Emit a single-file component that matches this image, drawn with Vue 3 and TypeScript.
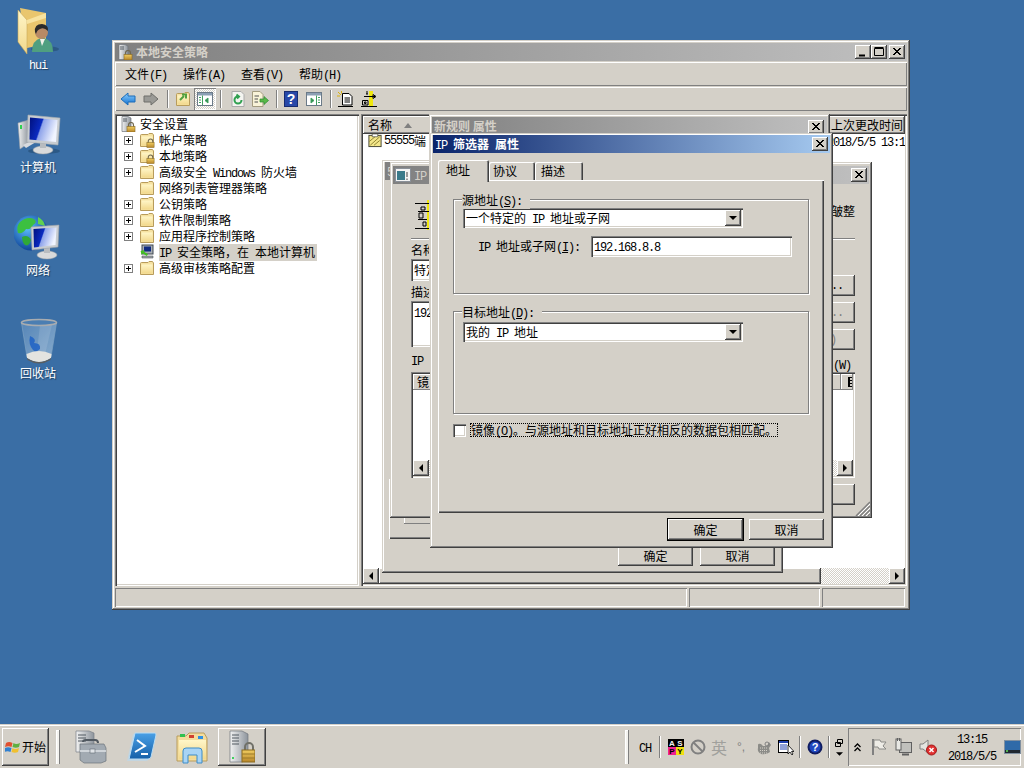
<script setup lang="ts">
import { h } from 'vue'

// Renders mixed text: Latin runs use the mono face at the 6px cell of the bitmap font; &X underlines X.
const T = (p: { s: string }) =>
  p.s.split(/([\x20-\x7e]+)/).map((run, i) =>
    i % 2
      ? h('span', { class: 'lat' }, run.split(/&(.)/).map((r, j) => (j % 2 ? h('u', r) : r)))
      : run,
  )

const menus = ['文件(F)', '操作(A)', '查看(V)', '帮助(H)']
const tree = [
  { t: '帐户策略', exp: true, lock: true },
  { t: '本地策略', exp: true, lock: true },
  { t: '高级安全 Windows 防火墙', exp: true },
  { t: '网络列表管理器策略', exp: false },
  { t: '公钥策略', exp: true },
  { t: '软件限制策略', exp: true },
  { t: '应用程序控制策略', exp: true },
  { t: 'IP 安全策略，在 本地计算机', exp: false, ip: true },
  { t: '高级审核策略配置', exp: true },
]
const desktop = [
  { id: '#d-user', t: 'hui' },
  { id: '#d-pc', t: '计算机' },
  { id: '#d-net', t: '网络' },
  { id: '#d-bin', t: '回收站' },
]
</script>

<template>
  <div class="screen">
    <svg class="defs" width="0" height="0">
      <defs>
        <linearGradient id="g-fold" x1="0" y1="0" x2="0" y2="1"><stop offset="0" stop-color="#fff6c8" /><stop offset="1" stop-color="#f2d88c" /></linearGradient>
        <linearGradient id="g-screen" x1="0" y1="0" x2="1" y2="0.3"><stop offset="0" stop-color="#00107c" /><stop offset="0.45" stop-color="#0a2ac0" /><stop offset="0.5" stop-color="#8fa4ea" /><stop offset="1" stop-color="#f0f4ff" /></linearGradient>
        <linearGradient id="g-metal" x1="0" y1="0" x2="1" y2="0"><stop offset="0" stop-color="#f2f2f2" /><stop offset="1" stop-color="#8d949c" /></linearGradient>
        <linearGradient id="g-blue" x1="0" y1="0" x2="0" y2="1"><stop offset="0" stop-color="#8fd0ff" /><stop offset="1" stop-color="#1070d0" /></linearGradient>
        <linearGradient id="g-ps" x1="0" y1="0" x2="0" y2="1"><stop offset="0" stop-color="#4aa0e6" /><stop offset="1" stop-color="#1560a8" /></linearGradient>
        <radialGradient id="g-globe" cx="0.4" cy="0.35" r="0.7"><stop offset="0" stop-color="#5cc0ff" /><stop offset="1" stop-color="#0a3a90" /></radialGradient>
        <linearGradient id="g-bin" x1="0" y1="0" x2="1" y2="1"><stop offset="0" stop-color="#5e8cbc" /><stop offset="1" stop-color="#9cbcd8" /></linearGradient>
        <linearGradient id="g-gold" x1="0" y1="0" x2="0" y2="1"><stop offset="0" stop-color="#f0cc60" /><stop offset="1" stop-color="#b8862a" /></linearGradient>
      </defs>
      <symbol id="folder" viewBox="0 0 16 16">
        <path d="M1.5 3.5 Q1.5 2.5 2.5 2.5 H9 L10 1.5 H13.5 L14.5 3 V14.5 H1.5 Z" fill="#f6e2a2" stroke="#b89c5c" />
        <rect x="2.5" y="4.5" width="11" height="9" fill="url(#g-fold)" />
      </symbol>
      <symbol id="lock" viewBox="0 0 10 10">
        <path d="M2.5 5 V3 a2.5 2.5 0 0 1 5 0 V5" fill="none" stroke="#706850" stroke-width="1.2" />
        <rect x="1" y="4.5" width="8" height="5.5" fill="url(#g-gold)" stroke="#8a6a20" stroke-width=".6" />
      </symbol>
      <symbol id="server" viewBox="0 0 16 16">
        <path d="M2 0.5 H8 L11 2 V14 L8 15.5 H2 Z" fill="url(#g-metal)" stroke="#70767c" stroke-width=".7" />
        <path d="M3 3 H7 M3 5 H7" stroke="#505860" />
      </symbol>
      <symbol id="d-user" viewBox="0 0 48 48">
        <path d="M6 0 L32 5 V36 L13 40 Z" fill="#e9c66e" />
        <path d="M4 2 L13 12 V46 L4 34 Z" fill="url(#g-fold)" stroke="#c9a858" stroke-width=".6" />
        <path d="M13 12 L32 5 V10 L13 16 Z" fill="#f7e3a0" />
        <ellipse cx="31" cy="41" rx="14" ry="3" fill="#1e4468" opacity=".5" />
        <path d="M18 44 Q18 32 27 30 H30 Q39 32 39 44 Z" fill="#4f9f80" />
        <path d="M26 31 L28 38 L31 31 Z" fill="#f0f0e8" />
        <circle cx="27.500" cy="24.500" r="6.500" fill="#b88a66" />
        <path d="M21 24 Q20 16 28 16 Q35 17 34 23 Q30 19 26 21 Q23 22 22 26 Z" fill="#2a2a2a" />
      </symbol>
      <symbol id="d-pc" viewBox="0 0 48 48">
        <ellipse cx="30" cy="40" rx="16" ry="3" fill="#1e4468" opacity=".5" />
        <path d="M4 12 L15 9 V32 L6 38 Z" fill="url(#g-metal)" stroke="#9aa0a6" stroke-width=".6" />
        <rect x="6" y="14" width="2" height="4" fill="#30d050" />
        <path d="M9 34 L19 29 L22 31 L12 37 Z" fill="#d8dade" />
        <ellipse cx="29" cy="39" rx="10" ry="4" fill="#d9dadb" stroke="#a0a4a8" stroke-width=".5" />
        <rect x="26" y="31" width="6" height="6" fill="#b8bcc0" />
        <path d="M14 4 L46 7 L44 34 L13 31 Z" fill="#c8ccd0" stroke="#a8acb0" stroke-width=".6" />
        <path d="M16 6.500 L43.500 9 L42 31 L15.500 28.500 Z" fill="url(#g-screen)" />
      </symbol>
      <symbol id="d-net" viewBox="0 0 48 48">
        <circle cx="17" cy="19" r="17.500" fill="url(#g-globe)" />
        <path d="M6 8 Q13 2 20 5 Q24 8 19 11 Q17 16 12 15 Q9 20 4 19 Q2 12 6 8 Z" fill="#3cc040" />
        <path d="M8 23 Q14 20 17 26 Q15 33 11 31 Q8 28 8 23 Z" fill="#2fa838" />
        <path d="M24 3 Q30 6 31 12 L24 10 Z" fill="#60d050" />
        <ellipse cx="33" cy="41" rx="10" ry="4" fill="#d9dadb" stroke="#a0a4a8" stroke-width=".5" />
        <rect x="30" y="33" width="6" height="6" fill="#b8bcc0" />
        <path d="M17 13 L45 11 L44 33 L18 36 Z" fill="#c8ccd0" stroke="#9aa0a6" stroke-width=".6" />
        <path d="M19.500 15 L42.500 13.500 L41.500 31 L20 33.500 Z" fill="url(#g-screen)" />
      </symbol>
      <symbol id="d-bin" viewBox="0 0 48 48">
        <path d="M7.500 6 L13 40 Q25 49 37 40 L42.500 6 Z" fill="url(#g-bin)" opacity=".8" stroke="#8fb0cc" stroke-width=".7" />
        <path d="M26 8 L22 42 H30 L38 8 Z" fill="#fff" opacity=".12" />
        <path d="M16 19 Q23 22 20 26 Q27 26 26 32 Q22 36 19 33 Q14 27 16 19 Z" fill="#1f62c4" opacity=".85" />
        <path d="M12.500 37 Q25 31 37.500 37 L37 41 Q25 49 13 41 Z" fill="#e4e4e0" />
        <path d="M13 41 Q25 49 37 41 L36.500 43 Q25 50 13.500 43 Z" fill="#5a5e60" />
        <ellipse cx="25" cy="5.500" rx="17.500" ry="3" fill="#4b7eb2" stroke="#a8acb0" stroke-width="1.600" />
      </symbol>
      <symbol id="i-x" viewBox="0 0 16 14">
        <path d="M4 3 L11 10 M5 3 L12 10 M11 3 L4 10 M12 3 L5 10" stroke="#000" stroke-width="1" fill="none" />
      </symbol>
    </svg>

    <!-- Desktop shortcuts -->
    <div class="shortcuts">
      <div v-for="d in desktop" :key="d.t" class="shortcut">
        <svg class="s48"><use :href="d.id" /></svg>
        <span class="shortcut-label"><T :s="d.t" /></span>
      </div>
    </div>

    <!-- MMC window -->
    <section class="win main">
      <header class="title off">
        <svg class="t-ic" viewBox="0 0 16 16"><use href="#server" /><use href="#lock" x="6" y="6" width="10" height="10" /></svg>
        <span class="title-text">本地安全策略</span>
        <span class="caps">
          <i class="cap"><svg viewBox="0 0 16 14"><path d="M4 10.500 H10" stroke="#000" stroke-width="2" /></svg></i>
          <i class="cap"><svg viewBox="0 0 16 14"><path d="M3.500 3.500 H12.500 V10.500 H3.500 Z M3.500 2.500 H12.500" fill="none" stroke="#000" /></svg></i>
          <i class="cap cap-x"><svg><use href="#i-x" /></svg></i>
        </span>
      </header>
      <nav class="menubar">
        <span v-for="m in menus" :key="m" class="menu"><T :s="m" /></span>
      </nav>
      <div class="toolbar">
        <svg class="tool back" viewBox="0 0 16 16"><path d="M1 8 L8 2 V5 H15 V11 H8 V14 Z" fill="url(#g-blue)" stroke="#1c6cb8" /></svg>
        <svg class="tool fwd" viewBox="0 0 16 16"><path d="M15 8 L8 2 V5 H1 V11 H8 V14 Z" fill="#9a9a96" stroke="#6e6e6a" /></svg>
        <i class="tsep s1"></i>
        <svg class="tool up" viewBox="0 0 16 16"><use href="#folder" /><path d="M5 9 L9 5 M7 3.500 H11 V7.500" stroke="#50a040" stroke-width="2" fill="none" /></svg>
        <span class="tree-btn">
          <svg viewBox="0 0 16 14"><rect x=".5" y=".5" width="15" height="13" fill="#fff" stroke="#6b7a88" /><rect x="1" y="1" width="14" height="2.500" fill="#8ca0b4" /><path d="M5.500 3.500 V13 M2 5.500 H4 M2 8 H4 M2 10.500 H4 M11 6 L8 8.500 L11 11 Z" stroke="#40a060" fill="#309050" /></svg>
        </span>
        <i class="tsep s2"></i>
        <svg class="tool refresh" viewBox="0 0 16 16"><path d="M2 .5 H11 L14 3.500 V15.500 H2 Z" fill="#f4f4f0" stroke="#aaa" /><path d="M11.500 9 A3.500 3.500 0 1 1 8 5.500 M6.500 3.500 L9 5.500 L7 7.500" stroke="#30a050" stroke-width="2" fill="none" /></svg>
        <svg class="tool export" viewBox="0 0 18 16"><path d="M1.500 .5 H9 L12 3.500 V15.500 H1.500 Z" fill="#f9f3d8" stroke="#a49c80" /><path d="M3.500 5 H8 M3.500 8 H7 M3.500 11 H7" stroke="#505050" /><path d="M9 8 H13 V5.500 L17.500 9.500 L13 13.500 V11 H9 Z" fill="#58b848" stroke="#2c8a30" stroke-width=".7" /></svg>
        <i class="tsep s3"></i>
        <svg class="tool help" viewBox="0 0 14 16"><rect x=".5" y=".5" width="13" height="15" fill="#2848a8" stroke="#182c70" /><text x="7" y="13" text-anchor="middle" class="help-q">?</text></svg>
        <svg class="tool pane" viewBox="0 0 16 14"><rect x=".5" y=".5" width="15" height="13" fill="#fff" stroke="#6b7a88" /><rect x="1" y="1" width="14" height="2.500" fill="#8ca0b4" /><path d="M10.500 3.500 V13 M12 5.500 H14 M12 8 H14 M12 10.500 H14 M5 6 L8 8.500 L5 11 Z" stroke="#40a060" fill="#309050" /></svg>
        <i class="tsep s4"></i>
        <svg class="tool newdoc" viewBox="0 0 17 16"><path d="M5.500 2.500 H12 L15 5.500 V14 H5.500 Z" fill="#fff" stroke="#000" /><path d="M7.500 7 H13 M7.500 9 H13 M7.500 11 H13" stroke="#000" /><path d="M1 15.500 H16" stroke="#000" /><path d="M1 1 L4 4 M0 5 H3 M4.500 0 V2.500" stroke="#d8b010" /></svg>
        <svg class="tool arrow" viewBox="0 0 16 16"><rect x="8" y="0" width="4" height="15" fill="#f0e810" /><path d="M0 15.500 H16" stroke="#000" /><path d="M3 5.500 H14 M12 3.500 L15 5.500 L12 7.500 Z M1.500 9.500 H7 V14 H1.500 Z M3.500 11 H5 V12.500 H3.500 Z M5 3 H7 M7 2 H5 M7 0 H5" stroke="#000" fill="none" /></svg>
      </div>

      <div class="panes">
        <div class="sunken tree">
          <div class="row root">
            <svg class="ico16" viewBox="0 0 16 16"><use href="#server" /><use href="#lock" x="6" y="6" width="10" height="10" /></svg>
            <span class="row-text">安全设置</span>
          </div>
          <div v-for="n in tree" :key="n.t" class="row child">
            <span class="exp" :class="{ none: !n.exp }"></span>
            <svg v-if="n.ip" class="ico16 ipico" viewBox="0 0 16 16">
              <rect x="3" y="1" width="11" height="9" fill="#a8aeb4" stroke="#404850" /><rect x="5" y="2.500" width="7" height="5" fill="#102a80" /><path d="M3 12 H14 V14 H3 Z" fill="#a0a4a8" stroke="#505860" stroke-width=".6" /><path d="M1 9 L4 6 V8 H9 V10 H4 V12 Z" fill="#40c020" transform="rotate(32 5 9)" />
            </svg>
            <svg v-else class="ico16" viewBox="0 0 16 16"><use href="#folder" /><use v-if="n.lock" href="#lock" x="7" y="6" width="9" height="10" /></svg>
            <span class="row-text" :class="{ sel: n.ip }"><T :s="n.t" /></span>
          </div>
        </div>
        <div class="sunken list">
          <div class="list-head">
            <span class="hcell h1">名称<svg class="sort" viewBox="0 0 8 5"><path d="M4 0 L8 5 H0 Z" fill="#808080" /></svg></span>
            <span class="hcell h2">上次更改时间</span>
          </div>
          <div class="list-row">
            <span class="c1">
              <svg class="rowico" viewBox="0 0 16 16"><rect x="1.500" y="2.500" width="13" height="12" fill="#f4e78a" stroke="#404030" /><path d="M3 13 L13 4 M2 9 L8 4 M7 13 L13 8" stroke="#8c8030" /><path d="M5 1 H11 V4 H5 Z" fill="#fff" stroke="#404030" stroke-width=".7" /></svg>
              <T s="55555端" />
            </span>
            <span class="c2"><T s="2018/5/5 13:1" /></span>
          </div>
          <div class="hscroll">
            <span class="sbtn"><i class="tri l"></i></span>
            <span class="thumb"></span>
            <span class="track"></span>
            <span class="sbtn"><i class="tri r"></i></span>
          </div>
        </div>
      </div>
      <footer class="status">
        <span class="seg g1"></span>
        <span class="seg g2"></span>
        <span class="seg g3"></span>
      </footer>
    </section>

    <!-- Rule properties, behind -->
    <section class="win rulewin">
      <header class="title off t-s"><span class="title-text"><T s="5" /></span></header>
      <div class="s-fill"></div>
      <div class="s-panel"><span class="s-inner"></span></div>
      <div class="foot s-foot">
        <button class="btn">确定</button>
        <button class="btn">取消</button>
      </div>
    </section>

    <!-- Filter list -->
    <section class="win listwin">
      <header class="title off t-ip">
        <svg class="t-ic" viewBox="0 0 16 16"><rect x=".5" y="1.500" width="15" height="13" fill="#f4f4f4" stroke="#8a9098" /><rect x="2" y="4" width="8" height="9" fill="#3a7a8a" /><path d="M12 5 V10 M12 11.500 V13" stroke="#404040" /></svg>
        <span class="title-text"><T s="IP" /></span>
        <span class="caps"><i class="cap cap-x"><svg><use href="#i-x" /></svg></i></span>
      </header>
      <div class="list-body">
        <div class="lw-head">
          <svg class="lw-ic" viewBox="0 0 16 30"><rect x="12" y="0" width="4" height="30" fill="#f0e810" /><path d="M0 3.500 H16 M0 28.500 H16 M3 11.500 H14 M3 19.500 H12" stroke="#000" /><path d="M4 13 H8 V18 H4 Z M6 7 H10 V10 H6 Z M8 22 H11 V26 H8 Z" stroke="#000" fill="none" /></svg>
          <span class="lw-text">皱整</span>
        </div>
        <div class="etch"></div>
        <div class="lw-mid">
          <div class="lw-fields">
            <label class="lw-lab">名称</label>
            <div class="sunken field f-name">特定</div>
            <label class="lw-lab">描述</label>
            <div class="sunken field f-desc"><T s="192" /></div>
          </div>
          <div class="lw-btns">
            <span class="ghost g-a"><T s=".." /></span>
            <span class="ghost g-b"><T s=".." /></span>
            <span class="ghost g-c"><T s=")" /></span>
          </div>
        </div>
        <div class="lw-cap"><T s="IP" /><span class="w"><T s="(W)" /></span></div>
        <div class="sunken lw-list">
          <div class="lw-lhead"><span class="lw-c1">镜</span><span class="lw-c2"></span></div>
          <div class="lw-blank"></div>
          <div class="lw-sb">
            <span class="sbtn"><i class="tri l"></i></span>
            <span class="track"></span>
            <span class="sbtn"><i class="tri r"></i></span>
          </div>
        </div>
        <div class="lw-foot"><span class="ghost g-d"></span></div>
      </div>
      <svg class="grip" viewBox="0 0 15 15"><path d="M15 1 L1 15 M15 5 L5 15 M15 9 L9 15 M15 13 L13 15" stroke="#808080" stroke-width="1.500" /><path d="M15 3 L3 15 M15 7 L7 15 M15 11 L11 15" stroke="#fff" /></svg>
    </section>

    <!-- New rule properties, behind the top dialog -->
    <section class="win newrule">
      <header class="title off t-n">
        <span class="title-text">新规则 属性</span>
        <span class="caps"><i class="cap cap-x"><svg><use href="#i-x" /></svg></i></span>
      </header>
    </section>

    <!-- IP filter properties, active -->
    <section class="win filter">
      <header class="title on">
        <span class="title-text"><T s="IP 筛选器 属性" /></span>
        <span class="caps"><i class="cap cap-x"><svg><use href="#i-x" /></svg></i></span>
      </header>
      <div class="tabs">
        <span class="tab active">地址</span>
        <span class="tab t2">协议</span>
        <span class="tab t3">描述</span>
      </div>
      <div class="page">
        <fieldset class="group g-src">
          <span class="legend"><T s="源地址(&S):" /></span>
          <div class="combo"><span class="combo-text"><T s="一个特定的 IP 地址或子网" /></span><span class="drop"><i class="tri d"></i></span></div>
          <div class="iprow">
            <span class="iplabel"><T s="IP 地址或子网(&I):" /></span>
            <div class="sunken ipinput"><T s="192.168.8.8" /></div>
          </div>
        </fieldset>
        <fieldset class="group g-dst">
          <span class="legend"><T s="目标地址(&D):" /></span>
          <div class="combo"><span class="combo-text"><T s="我的 IP 地址" /></span><span class="drop"><i class="tri d"></i></span></div>
        </fieldset>
        <div class="mirror">
          <span class="check"></span>
          <span class="focus"><T s="镜像(&O)。与源地址和目标地址正好相反的数据包相匹配。" /></span>
        </div>
      </div>
      <div class="foot f-foot">
        <button class="btn default">确定</button>
        <button class="btn">取消</button>
      </div>
    </section>

    <!-- Taskbar -->
    <div class="taskbar">
      <button class="start">
        <svg viewBox="0 0 16 16" class="flag"><path d="M1 4 Q4 2 7.500 4 L6.500 8 Q3.500 6.500 0 8 Z" fill="#e05030" /><path d="M8.500 4 Q11 6 15 4 L14 8 Q11 9.500 7.500 8 Z" fill="#60b040" /><path d="M0 9 Q3 7.500 6.500 9 L5.500 13 Q2.500 11.500 -1 13 Z" fill="#3080d0" /><path d="M7.500 9 Q10 11 14 9 L13 13 Q10 14.500 6.500 13 Z" fill="#f0c030" /></svg>
        <span>开始</span>
      </button>
      <i class="grip-sep sep-a"></i>
      <svg class="q q1" viewBox="0 0 32 34">
        <path d="M1 1 H14 L19 3 V22 H1 Z" fill="url(#g-metal)" stroke="#7a8088" stroke-width=".7" /><path d="M3 5 H11 M3 8 H11 M3 11 H11" stroke="#505860" />
        <path d="M8 12 Q8 10 11 10 H20 Q23 10 23 13" fill="none" stroke="#505860" stroke-width="2" />
        <path d="M5 14 H29 L31 18 V31 L26 33 H9 L5 30 Z" fill="#a2aab2" stroke="#6a727a" stroke-width=".7" /><path d="M5 21 H31" stroke="#dfe3e7" stroke-width="1.500" /><rect x="15" y="19" width="5" height="4" fill="#e0e4e8" stroke="#606870" stroke-width=".6" />
      </svg>
      <svg class="q q2" viewBox="0 0 30 30">
        <path d="M7 1 H29 L23 26 Q22 28 20 28 H1 Z" fill="#b8d8f0" opacity=".6" transform="translate(-1,1)" />
        <path d="M8 1 H28 Q29 1 29 3 L24 25 Q23.500 27 21 27 H3 Q2 27 2.500 25 Z" fill="url(#g-ps)" stroke="#b8dcf4" />
        <path d="M10 8 L18 14 L8 20 M14 22 H21" stroke="#fff" stroke-width="2" fill="none" />
      </svg>
      <svg class="q q3" viewBox="0 0 32 34">
        <path d="M1 6 H10 L13 3 H28 L31 8 V31 H1 Z" fill="#f3dc9c" stroke="#b89c5c" /><rect x="4" y="4" width="5" height="3" fill="#30c050" /><rect x="13" y="5" width="5" height="3" fill="#d04030" /><rect x="22" y="6" width="5" height="3" fill="#3090e0" />
        <path d="M3 10 H30 V29 H3 Z" fill="url(#g-fold)" />
        <path d="M7 33 V21 Q7 18 10 18 H23 Q26 18 26 21 V33 H21 V25 H12 V33 Z" fill="#a8d4f4" stroke="#3c8cc8" />
      </svg>
      <button class="task-active">
        <svg viewBox="0 0 26 34"><path d="M1 1 H13 L19 4 V29 L13 32 H1 Z" fill="url(#g-metal)" stroke="#70767c" stroke-width=".7" /><path d="M3 5 H10 M3 8 H10 M3 11 H10 M3 14 H10" stroke="#505860" /><rect x="3" y="27" width="2" height="2" fill="#40d060" /><path d="M16 20 V17 a4 4 0 0 1 8 0 V20" fill="none" stroke="#707068" stroke-width="2" /><rect x="13" y="20" width="13" height="12" fill="url(#g-gold)" stroke="#8a6a20" /><path d="M13 24 H26 M13 28 H26" stroke="#9a7828" /></svg>
      </button>
      <span class="fill"></span>
      <i class="grip-sep sep-b"></i>
      <span class="ch"><T s="CH" /></span>
      <i class="vsep v1"></i>
      <svg class="ime" viewBox="0 0 16 16"><rect width="16" height="16" fill="#000" /><rect x="0" y="8" width="8" height="8" fill="#f02090" /><rect x="8" y="8" width="8" height="8" fill="#f0e010" /><text x="4" y="7" class="ime-t wh">A</text><text x="12" y="7" class="ime-t wh">S</text><text x="4" y="15" class="ime-t bk">P</text><text x="12" y="15" class="ime-t bk">Y</text></svg>
      <svg class="noentry" viewBox="0 0 16 16"><circle cx="8" cy="8" r="6.500" fill="none" stroke="#808080" stroke-width="2" /><path d="M3.500 3.500 L12.500 12.500" stroke="#808080" stroke-width="2" /></svg>
      <span class="ying">英</span>
      <span class="dots">°,</span>
      <svg class="softkb" viewBox="0 0 16 16"><path d="M2 6 Q2 4 5 5 L7 7 H11 L13 3 L15 6 L13 9 L14 13 Q10 16 5 15 Q1 13 2 9 Z" fill="#8c8c88" /><path d="M4 9 H12 M4 11.500 H12 M4 14 H11" stroke="#d4d0c8" stroke-dasharray="1 1" /><circle cx="11" cy="5" r="2" fill="none" stroke="#808080" /></svg>
      <svg class="kbdoc" viewBox="0 0 16 16"><rect x=".5" y="1.500" width="10" height="12" fill="#fff" stroke="#000" /><rect x="1" y="2" width="9" height="2" fill="#2040b0" /><path d="M2 6 H9 M2 8 H9 M2 10 H9" stroke="#2040b0" /><path d="M10 6 V15 L12 13 L14 16 L15 15 L13.500 12.500 H16 Z" fill="#fff" stroke="#000" stroke-width=".8" /></svg>
      <i class="vsep v2"></i>
      <svg class="qhelp" viewBox="0 0 16 16"><circle cx="8" cy="8" r="7.500" fill="#101c60" /><circle cx="8" cy="8" r="5.500" fill="#2048c0" /><text x="8" y="12" text-anchor="middle" class="help-s">?</text></svg>
      <i class="vsep v3"></i>
      <span class="mini">
        <svg viewBox="0 0 8 8"><path d="M2.500 .5 H7.500 V4.500 H2.500 Z M.5 3.500 H5.500 V7.500 H.5 Z" fill="#d4d0c8" stroke="#000" /></svg>
        <svg viewBox="0 0 8 4"><path d="M0 0 H8 L4 4 Z" fill="#000" /></svg>
      </span>
      <div class="tray">
        <svg class="chev" viewBox="0 0 7 9"><path d="M.5 4 L3.500 1 L6.500 4 M.5 8 L3.500 5 L6.500 8" fill="none" stroke="#000" stroke-width="1.300" /></svg>
        <svg class="tr-flag" viewBox="0 0 16 18"><path d="M2 1 V17" stroke="#808080" stroke-width="2" /><path d="M3 2 H9 L10 4 H15 L12 8 L15 11 H8 L7 9 H3 Z" fill="#eeece6" stroke="#8a8a86" /></svg>
        <svg class="tr-net" viewBox="0 0 17 18"><rect x="4.500" y="4.500" width="12" height="10" fill="#c0c0bc" stroke="#606060" /><path d="M7 16.500 H14" stroke="#606060" stroke-width="2" /><rect x="1" y="1" width="5" height="11" fill="#e8e8e4" stroke="#606060" /><path d="M2.500 0 V3 M4.500 0 V3" stroke="#606060" /></svg>
        <svg class="tr-snd" viewBox="0 0 18 18"><path d="M1 6 H4 L9 2 V15 L4 11 H1 Z" fill="#e4e4e0" stroke="#808080" /><circle cx="12.500" cy="12" r="5" fill="#e03030" stroke="#a01818" /><path d="M10.500 10 L14.500 14 M14.500 10 L10.500 14" stroke="#fff" stroke-width="1.500" /></svg>
        <div class="clock"><span><T s="13:15" /></span><span><T s="2018/5/5" /></span></div>
        <svg class="tr-desk" viewBox="0 0 17 14"><rect x=".5" y=".5" width="16" height="13" fill="#2f6aa8" stroke="#8090a0" /><rect x="1" y="10" width="15" height="3" fill="#202830" /><rect x="2" y="10" width="2" height="2" fill="#50b050" /></svg>
      </div>
    </div>
  </div>
</template>

<style scoped>
.screen {
  position: relative;
  display: flex;
  flex-direction: column;
  justify-content: flex-end;
  width: 1024px;
  height: 768px;
  overflow: hidden;
  background: #3a6ea5;
  font: 12px/16px "Noto Sans CJK SC", "Liberation Sans", sans-serif;
  color: #000;
}
.defs { position: absolute; }

/* desktop */
.shortcuts { position: absolute; left: 0; top: 8px; width: 76px; display: flex; flex-direction: column; }
.shortcut { height: 103px; display: flex; flex-direction: column; align-items: center; }
.s48 { width: 48px; height: 48px; flex: none; }
.shortcut-label { color: #fff; line-height: 16px; text-shadow: 1px 1px 1px #1f3f60; }

/* window chrome */
.win {
  position: absolute;
  display: flex;
  flex-direction: column;
  padding: 3px;
  box-sizing: border-box;
  background: #d4d0c8;
  box-shadow: inset -1px -1px #404040, inset 1px 1px #d4d0c8, inset -2px -2px #808080, inset 2px 2px #fff;
}
.title {
  display: flex;
  align-items: center;
  flex: none;
  height: 18px;
  padding: 0 2px;
  font-weight: 700;
}
.title.off { color: #d4d0c8; background: linear-gradient(90deg, #808080, #c0c0c0); }
.title.on { color: #fff; background: linear-gradient(90deg, #0a246a, #a6caf0); }
.title-text { line-height: 18px; white-space: nowrap; }
.t-ic { width: 16px; height: 16px; margin-right: 3px; flex: none; }
.caps { margin-left: auto; display: flex; gap: 0; }
.cap { display: block; width: 16px; height: 14px; background: #d4d0c8; box-shadow: inset -1px -1px #404040, inset 1px 1px #fff, inset -2px -2px #808080; }
.cap svg { display: block; width: 16px; height: 14px; }
.cap-x { margin-left: 2px; }

.main { left: 112px; top: 40px; width: 798px; height: 570px; }
.menubar {
  display: flex;
  flex: none;
  height: 24px;
  margin-top: 1px;
  padding-left: 10px;
  gap: 16px;
  align-items: center;
  box-shadow: inset 1px 1px #fff, inset -1px -1px #808080;
}
.menu { white-space: nowrap; }
.toolbar {
  position: relative;
  display: flex;
  flex: none;
  align-items: center;
  height: 24px;
  margin-top: 1px;
  padding-left: 5px;
  box-shadow: inset 1px 1px #fff, inset -1px -1px #808080;
}
.tool { flex: none; }
.back { width: 16px; height: 16px; margin-left: 0; }
.fwd { width: 16px; height: 16px; margin-left: 7px; }
.tsep { flex: none; width: 2px; height: 18px; background: #808080; border-right: 1px solid #fff; box-sizing: border-box; }
.s1 { margin-left: 8px; }
.up { width: 16px; height: 16px; margin-left: 6px; }
.tree-btn {
  flex: none;
  display: flex;
  align-items: center;
  justify-content: center;
  width: 22px;
  height: 22px;
  margin-left: 3px;
  background: repeating-conic-gradient(#fff 0 25%, #d4d0c8 0 50%) 0 0 / 2px 2px;
  box-shadow: inset 1px 1px #808080, inset -1px -1px #fff;
}
.tree-btn svg { width: 16px; height: 14px; }
.s2 { margin-left: 4px; }
.refresh { width: 16px; height: 16px; margin-left: 8px; }
.export { width: 18px; height: 16px; margin-left: 5px; }
.s3 { margin-left: 7px; }
.help { width: 14px; height: 16px; margin-left: 6px; }
.help-q { font: 700 14px "Liberation Sans", sans-serif; fill: #fff; }
.pane { width: 16px; height: 14px; margin-left: 8px; }
.s4 { margin-left: 8px; }
.newdoc { width: 17px; height: 16px; margin-left: 5px; }
.arrow { width: 16px; height: 16px; margin-left: 7px; }

.panes { display: flex; flex: none; height: 472px; margin-top: 3px; gap: 2px; }
.sunken { box-shadow: inset 1px 1px #808080, inset 2px 2px #404040, inset -1px -1px #fff, inset -2px -2px #d4d0c8; background: #fff; }
.tree { width: 244px; flex: none; box-sizing: border-box; padding: 2px 0 0 5px; }
.row { display: flex; align-items: center; height: 16px; white-space: nowrap; }
.row-text { line-height: 16px; }
.ico16 { width: 16px; height: 16px; flex: none; }
.root .row-text { margin-left: 4px; }
.child { padding-left: 4px; }
.child .ico16 { margin-left: 6px; }
.child .row-text { margin-left: 4px; }
.exp { flex: none; width: 9px; height: 9px; border: 1px solid #808080; box-sizing: border-box; background: linear-gradient(#000, #000) center / 5px 1px no-repeat, linear-gradient(#000, #000) center / 1px 5px no-repeat; }
.exp.none { visibility: hidden; }
.row-text.sel { background: #d4d0c8; padding-right: 2px; }

.list { flex: 1; min-width: 0; display: flex; flex-direction: column; padding: 2px; box-sizing: border-box; }
.list-head { display: flex; flex: none; height: 18px; }
.hcell { display: flex; align-items: center; box-sizing: border-box; background: #d4d0c8; box-shadow: inset -1px -1px #404040, inset 1px 1px #fff, inset -2px -2px #808080; }
.h1 { width: 466px; padding-left: 5px; }
.h2 { flex: 1; padding-left: 2px; white-space: nowrap; }
.sort { width: 8px; height: 5px; margin-left: 12px; }
.list-row { display: flex; flex: none; height: 15px; line-height: 15px; margin-top: -1px; }
.c1 { width: 461px; display: flex; align-items: center; padding-left: 4px; box-sizing: border-box; }
.c2 { flex: 1; padding-left: 3px; white-space: nowrap; overflow: hidden; }
.rowico { width: 16px; height: 15px; margin-right: 1px; flex: none; }
.hscroll { display: flex; flex: none; height: 16px; margin-top: auto; }
.sbtn { flex: none; display: flex; align-items: center; justify-content: center; width: 16px; height: 16px; background: #d4d0c8; box-shadow: inset -1px -1px #404040, inset 1px 1px #fff, inset -2px -2px #808080; }
.thumb { width: 442px; background: #d4d0c8; box-shadow: inset -1px -1px #404040, inset 1px 1px #fff, inset -2px -2px #808080; }
.track { flex: 1; background: repeating-conic-gradient(#fff 0 25%, #d4d0c8 0 50%) 0 0 / 2px 2px; }
.tri { display: block; width: 0; height: 0; border-style: solid; border-color: transparent; }
.tri.l { border-width: 4px 4px 4px 0; border-right-color: #000; }
.tri.r { border-width: 4px 0 4px 4px; border-left-color: #000; }
.tri.d { border-width: 4px 4px 0 4px; border-top-color: #000; }

.status { display: flex; flex: none; height: 19px; margin-top: 2px; gap: 2px; }
.seg { box-shadow: inset 1px 1px #808080, inset -1px -1px #fff; }
.g1 { width: 572px; }
.g2 { width: 131px; }
.g3 { flex: 1; margin-right: 2px; }

/* rule window */
.rulewin { left: 382px; top: 160px; width: 401px; height: 413px; }
.t-s { margin-top: -1px; }
.s-fill { flex: 1; }
.s-panel { flex: none; height: 60px; margin: 0 4px 6px 4px; box-shadow: inset 1px 1px #fff, inset -1px -1px #404040, inset -2px -2px #808080; padding: 15px 0 0 15px; box-sizing: border-box; }
.s-inner { display: block; width: 200px; height: 30px; box-shadow: inset -1px -1px #808080, inset 1px 1px #fff; }
.foot { display: flex; justify-content: flex-end; flex: none; }
.s-foot { gap: 7px; padding-right: 5px; padding-bottom: 4px; }
.btn {
  width: 75px;
  height: 21px;
  padding: 0;
  border: 0;
  font: inherit;
  line-height: 21px;
  color: #000;
  background: #d4d0c8;
  box-shadow: inset -1px -1px #404040, inset 1px 1px #fff, inset -2px -2px #808080;
}
.btn.default { box-shadow: 0 0 0 1px #000, inset -1px -1px #404040, inset 1px 1px #fff, inset -2px -2px #808080; }

/* filter list window */
.listwin { left: 390px; top: 162px; width: 482px; height: 356px; padding-top: 4px; }
.list-body { display: flex; flex-direction: column; flex: 1; padding: 0 14px 0 18px; }
.lw-head { display: flex; align-items: flex-start; justify-content: space-between; height: 54px; padding: 16px 0 0 4px; box-sizing: border-box; }
.lw-ic { width: 16px; height: 30px; }
.lw-text { margin-top: 3px; }
.etch { height: 2px; background: #808080; border-bottom: 1px solid #fff; box-sizing: border-box; }
.lw-mid { display: flex; justify-content: space-between; height: 110px; }
.lw-fields { width: 340px; }
.lw-lab { display: block; height: 18px; line-height: 18px; padding-top: 1px; }
.field { padding: 2px 3px; box-sizing: border-box; height: 22px; line-height: 18px; }
.f-name { margin-bottom: 1px; }
.f-desc { height: 46px; }
.lw-btns { display: flex; flex-direction: column; width: 90px; padding-top: 35px; gap: 6px; box-sizing: border-box; }
.ghost {
  display: flex;
  align-items: center;
  justify-content: flex-end;
  height: 21px;
  flex: none;
  white-space: nowrap;
  background: #d4d0c8;
  box-shadow: inset -1px -1px #404040, inset 1px 1px #fff, inset -2px -2px #808080;
}
.g-a { padding-right: 12px; }
.g-b { padding-right: 12px; color: #808080; }
.g-c { padding-right: 19px; color: #808080; }
.g-d { width: 90px; }
.lw-cap { display: flex; justify-content: space-between; height: 17px; line-height: 17px; margin-top: 5px; padding-right: 4px; }
.lw-list { display: flex; flex-direction: column; height: 106px; padding: 2px; box-sizing: border-box; flex: none; }
.lw-lhead { display: flex; height: 16px; flex: none; }
.lw-c1, .lw-c2 { background: #d4d0c8; box-shadow: inset -1px -1px #808080, inset 1px 1px #fff; overflow: hidden; }
.lw-c1 { width: 428px; padding-left: 4px; box-sizing: border-box; }
.lw-c2 { flex: 1; background: linear-gradient(#000, #000) 7px 3px / 2px 10px no-repeat, repeating-linear-gradient(#000 0 1px, transparent 1px 3px) 8px 3px / 3px 10px no-repeat, #d4d0c8; }
.lw-blank { flex: 1; }
.lw-sb { display: flex; height: 16px; flex: none; }
.lw-foot { display: flex; justify-content: flex-end; margin-top: 6px; }
.grip { position: absolute; right: 2px; bottom: 2px; width: 15px; height: 15px; }

/* new rule */
.newrule { left: 429px; top: 114px; width: 401px; height: 200px; }
.t-n .caps { margin-right: 1px; padding-top: 1px; }

/* top dialog */
.filter { left: 430px; top: 133px; width: 403px; height: 415px; padding-top: 2px; }
.tabs { display: flex; align-items: flex-end; flex: none; height: 27px; margin-left: 5px; position: relative; z-index: 1; }
.tab { display: flex; align-items: center; box-sizing: border-box; height: 18px; background: #d4d0c8; border-radius: 2px 2px 0 0; box-shadow: inset 1px 1px #fff, inset -1px 0 #404040, inset -2px 0 #808080; }
.tab.active { width: 51px; height: 22px; margin-bottom: -2px; padding: 0 0 2px 8px; }
.tab.t2 { width: 46px; padding-left: 4px; }
.tab.t3 { width: 48px; padding-left: 6px; }
.page {
  flex: none;
  height: 333px;
  margin: 0 6px 0 5px;
  padding: 19px 15px 0;
  box-sizing: border-box;
  box-shadow: inset 1px 1px #fff, inset -1px -1px #404040, inset -2px -2px #808080;
}
.group {
  position: relative;
  margin: 0;
  padding: 8px 9px 0;
  min-width: 0;
  box-sizing: border-box;
  border: 1px solid #808080;
  box-shadow: 1px 1px #fff, inset 1px 1px #fff;
}
.g-src { height: 95px; }
.g-dst { height: 103px; margin-top: 17px; padding-top: 10px; }
.legend { position: absolute; left: 8px; top: -8px; padding-right: 8px; background: #d4d0c8; white-space: nowrap; }
.combo {
  display: flex;
  align-items: center;
  width: 280px;
  height: 20px;
  padding: 0 2px 0 3px;
  box-sizing: border-box;
  background: #fff;
  box-shadow: inset 1px 1px #808080, inset 2px 2px #404040, inset -1px -1px #fff, inset -2px -2px #d4d0c8;
}
.combo-text { flex: 1; white-space: nowrap; }
.drop { display: flex; align-items: center; justify-content: center; width: 16px; height: 16px; background: #d4d0c8; box-shadow: inset -1px -1px #404040, inset 1px 1px #fff, inset -2px -2px #808080; }
.iprow { display: flex; align-items: center; margin-top: 8px; padding-left: 15px; }
.iplabel { width: 113px; flex: none; white-space: nowrap; }
.ipinput { width: 201px; height: 21px; line-height: 20px; padding-left: 3px; box-sizing: border-box; }
.mirror { display: flex; align-items: center; margin-top: 9px; }
.check { flex: none; width: 13px; height: 13px; box-sizing: border-box; background: #fff; box-shadow: inset 1px 1px #808080, inset 2px 2px #404040, inset -1px -1px #fff, inset -2px -2px #d4d0c8; }
.focus { margin-left: 4px; padding: 0 1px; outline: 1px dotted #000; outline-offset: -1px; line-height: 14px; height: 14px; white-space: nowrap; }
.f-foot { gap: 6px; margin-top: 6px; margin-right: 6px; }

/* taskbar */
.taskbar {
  position: relative;
  display: flex;
  align-items: center;
  flex: none;
  height: 44px;
  box-sizing: border-box;
  padding: 2px 3px 0 2px;
  background: #d4d0c8;
  box-shadow: inset 0 1px #d4d0c8, inset 0 2px #fff;
}
.start {
  display: flex;
  align-items: center;
  flex: none;
  width: 47px;
  height: 38px;
  padding: 0 0 0 3px;
  border: 0;
  font: inherit;
  color: #000;
  background: #d4d0c8;
  box-shadow: inset -1px -1px #404040, inset 1px 1px #fff, inset -2px -2px #808080;
}
.flag { width: 16px; height: 16px; margin-right: 1px; }
.grip-sep { flex: none; width: 3px; height: 34px; background: #f4f3ef; box-shadow: 1px 0 #808080, inset 1px 1px #fff; }
.sep-a { margin-left: 7px; }
.q { flex: none; }
.q1 { width: 32px; height: 34px; margin-left: 16px; }
.q2 { width: 30px; height: 30px; margin-left: 20px; }
.q3 { width: 32px; height: 34px; margin-left: 19px; }
.task-active {
  display: flex;
  align-items: center;
  justify-content: center;
  flex: none;
  width: 48px;
  height: 38px;
  margin-left: 10px;
  padding: 0;
  border: 0;
  background: #d4d0c8;
  box-shadow: inset -1px -1px #404040, inset 1px 1px #fff, inset -2px -2px #808080;
}
.task-active svg { width: 26px; height: 34px; }
.fill { flex: 1; }
.ch { margin-left: 11px; width: 14px; flex: none; }
.vsep { flex: none; width: 2px; height: 22px; background: #808080; border-right: 1px solid #fff; box-sizing: border-box; }
.v1 { margin-left: 6px; }
.ime { width: 16px; height: 16px; margin-left: 7px; flex: none; }
.ime-t { font: 700 8px "Liberation Sans", sans-serif; text-anchor: middle; }
.wh { fill: #f0f0f0; }
.bk { fill: #000; }
.noentry { width: 16px; height: 16px; margin-left: 6px; flex: none; }
.ying { font-size: 16px; color: #a0a09c; margin-left: 5px; width: 16px; flex: none; }
.dots { font: 12px "Liberation Sans", sans-serif; color: #808080; margin-left: 10px; width: 11px; flex: none; }
.softkb { width: 16px; height: 16px; margin-left: 8px; flex: none; }
.kbdoc { width: 16px; height: 16px; margin-left: 6px; flex: none; }
.v2 { margin-left: 5px; }
.qhelp { width: 16px; height: 16px; margin-left: 6px; flex: none; }
.help-s { font: 700 11px "Liberation Sans", sans-serif; fill: #fff; }
.v3 { margin-left: 5px; }
.mini { display: flex; flex-direction: column; align-items: center; gap: 5px; margin-left: 5px; flex: none; width: 8px; }
.mini svg:first-child { width: 8px; height: 8px; }
.mini svg:last-child { width: 7px; height: 4px; }
.tray {
  display: flex;
  align-items: center;
  flex: none;
  width: 173px;
  height: 38px;
  margin-left: 5px;
  box-sizing: border-box;
  box-shadow: inset 1px 1px #808080, inset -1px -1px #fff;
}
.chev { width: 7px; height: 9px; margin-left: 6px; flex: none; }
.tr-flag { width: 16px; height: 18px; margin-left: 10px; flex: none; }
.tr-net { width: 17px; height: 18px; margin-left: 8px; flex: none; }
.tr-snd { width: 18px; height: 18px; margin-left: 7px; flex: none; }
.clock { display: flex; flex-direction: column; align-items: center; width: 48px; margin-left: 11px; flex: none; line-height: 16px; }
.tr-desk { width: 17px; height: 14px; margin-left: 8px; flex: none; }
</style>

<style>
.lat { font: 12px "Liberation Mono", monospace; letter-spacing: -1.2px; white-space: pre; }
</style>
